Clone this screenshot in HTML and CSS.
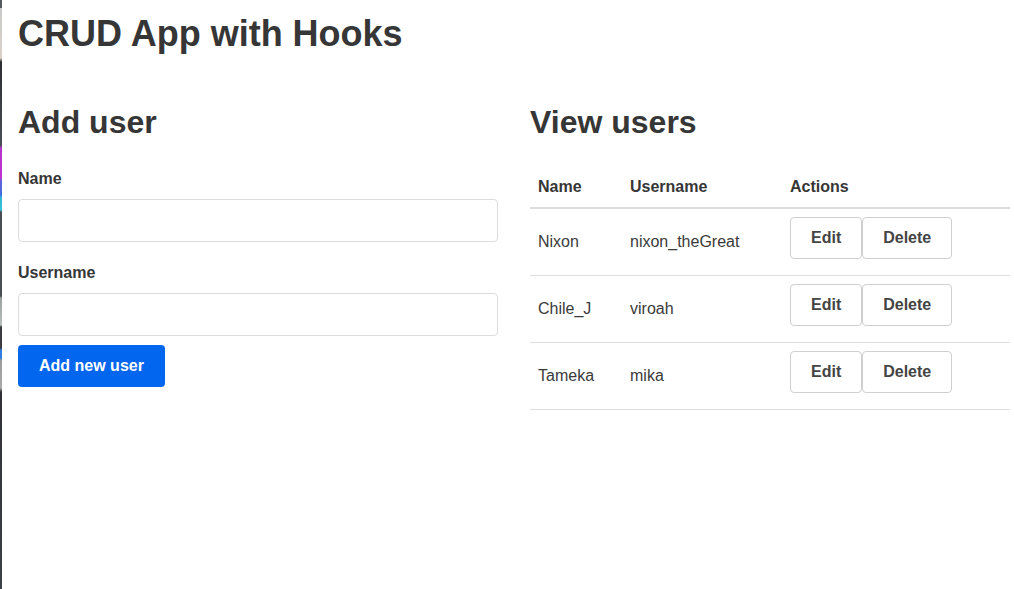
FILE: index.html
```html
<!DOCTYPE html>
<html lang="en">
<head>
<meta charset="utf-8">
<title>CRUD App with Hooks</title>
<link rel="stylesheet" href="styles.css">
</head>
<body>
<div class="edge-strip"></div>
<div class="container">
  <h1 class="title">CRUD App with Hooks</h1>
  <div class="columns">
    <section class="col">
      <h2 class="section-title">Add user</h2>
      <form class="user-form">
        <div class="field">
          <label class="field-label">Name</label>
          <input class="text-input" type="text" name="name">
        </div>
        <div class="field">
          <label class="field-label">Username</label>
          <input class="text-input" type="text" name="username">
        </div>
        <button class="btn-primary" type="button">Add new user</button>
      </form>
    </section>
    <section class="col">
      <h2 class="section-title">View users</h2>
      <table class="users-table">
        <thead>
          <tr>
            <th class="c-name">Name</th>
            <th class="c-user">Username</th>
            <th class="c-actions">Actions</th>
          </tr>
        </thead>
        <tbody>
          <tr>
            <td>Nixon</td>
            <td>nixon_theGreat</td>
            <td><div class="actions"><button class="btn-outline" type="button">Edit</button><button class="btn-outline" type="button">Delete</button></div></td>
          </tr>
          <tr>
            <td>Chile_J</td>
            <td>viroah</td>
            <td><div class="actions"><button class="btn-outline" type="button">Edit</button><button class="btn-outline" type="button">Delete</button></div></td>
          </tr>
          <tr>
            <td>Tameka</td>
            <td>mika</td>
            <td><div class="actions"><button class="btn-outline" type="button">Edit</button><button class="btn-outline" type="button">Delete</button></div></td>
          </tr>
        </tbody>
      </table>
    </section>
  </div>
</div>
</body>
</html>
```

FILE: styles.css
```css
* { box-sizing: border-box; }

html, body {
  margin: 0;
  padding: 0;
  background: #fff;
}

body {
  font-family: "Liberation Sans", Arial, Helvetica, sans-serif;
  color: #363636;
  font-size: 16px;
  line-height: 24px;
}

.edge-strip {
  position: fixed;
  left: 0;
  top: 0;
  width: 2px;
  height: 100%;
  background: linear-gradient(to bottom,
    #55585d 0, #55585d 8px,
    #c9c9c9 8px, #d8d2c8 58px,
    #2b2d31 62px, #4a4d52 145px,
    #b535c9 148px, #c12fd2 178px,
    #6a5fd8 180px, #3f6fe0 195px,
    #31b8d0 198px, #36c2d6 210px,
    #4a4d52 212px, #4a4d52 296px,
    #9aa2a0 298px, #b8beba 325px,
    #3a3c40 327px, #3a3c40 348px,
    #2f7de0 350px, #2f7de0 358px,
    #9c9c9c 360px, #a8a8a8 388px,
    #2f3135 392px, #3d4044 589px);
}

.container {
  padding: 0 4px 0 18px;
}

.title {
  margin: 12px 0 0;
  font-size: 36px;
  line-height: 43px;
  font-weight: 700;
}

.columns {
  display: grid;
  grid-template-columns: 480px 480px;
  column-gap: 32px;
  margin-top: 48px;
}

.section-title {
  margin: 0 0 26px;
  font-size: 32px;
  line-height: 38px;
  font-weight: 700;
}

.user-form {
  display: flex;
  flex-direction: column;
  align-items: flex-start;
}

.field {
  display: flex;
  flex-direction: column;
  width: 100%;
}

.field + .field {
  margin-top: 19px;
}

.field-label {
  font-weight: 700;
  margin-bottom: 8px;
}

.text-input {
  width: 480px;
  height: 43px;
  border: 1px solid #dcdcdc;
  border-radius: 4px;
  background: #fff;
  font: inherit;
  padding: 0 12px;
}

.btn-primary {
  margin-top: 9px;
  height: 42px;
  padding: 0 21px;
  border: none;
  border-radius: 4px;
  background: #0366ee;
  color: #fff;
  font: inherit;
  font-weight: 700;
  line-height: 24px;
}

.users-table {
  width: 480px;
  border-collapse: collapse;
  border-spacing: 0;
  text-align: left;
}

.users-table th {
  padding: 8px 8px 8px;
  font-weight: 700;
  border-bottom: 2px solid #dddddd;
}

.c-name { width: 92px; }
.c-user { width: 160px; }

.users-table td {
  padding: 8px;
  vertical-align: middle;
  border-bottom: 1px solid #dddddd;
  color: #3a3a3a;
}

.actions {
  display: flex;
}

.btn-outline {
  height: 42px;
  margin-bottom: 8px;
  padding: 0 20px;
  border: 1px solid #cfcfcf;
  border-radius: 4px;
  background: #fff;
  color: #444;
  font: inherit;
  font-weight: 700;
  line-height: 24px;
}
```
